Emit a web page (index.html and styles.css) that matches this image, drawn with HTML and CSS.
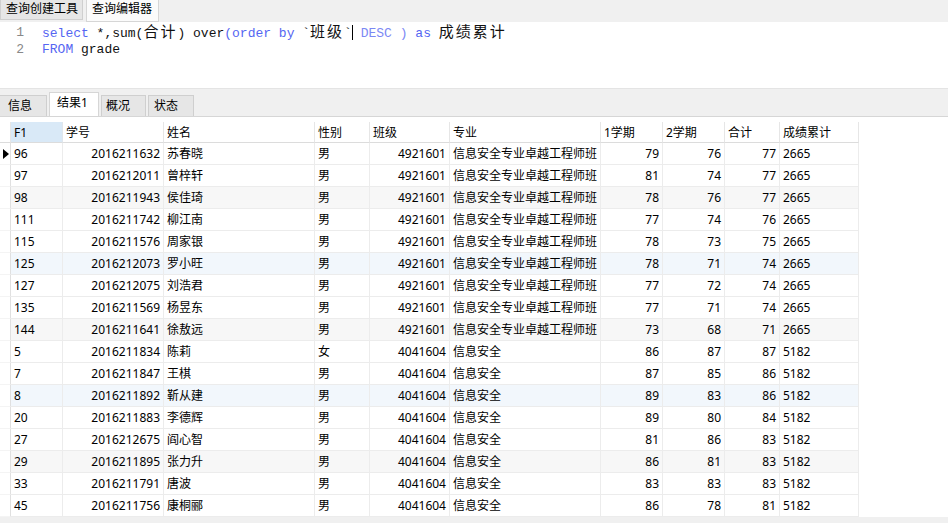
FILE: index.html
```html
<!DOCTYPE html>
<html lang="zh">
<head>
<meta charset="utf-8">
<title>查询编辑器</title>
<link rel="stylesheet" href="styles.css">
</head>
<body>
<div class="app">
  <div class="toptabs">
    <div class="ttab">查询创建工具</div>
    <div class="ttab active">查询编辑器</div>
  </div>
  <div class="editor">
    <div class="line"><span class="ln">1</span><span class="code"><span class="kw">select</span> *,sum(<span class="cjk">合计</span>) over<span class="kw">(order by</span> `<span class="cjk">班级</span>`<span class="caret"></span> <span class="kw2">DESC )</span> <span class="kw">as</span> <span class="cjk">成绩累计</span></span></div>
    <div class="line"><span class="ln">2</span><span class="code"><span class="kw">FROM</span> grade</span></div>
  </div>
  <div class="splitter"></div>
  <div class="restabs">
    <div class="rtab">信息</div>
    <div class="rtab active">结果1</div>
    <div class="rtab">概况</div>
    <div class="rtab">状态</div>
  </div>
  <div class="gridwrap">
    <div class="grid">
      <div class="hc ind"></div><div class="hc sel">F1</div><div class="hc">学号</div><div class="hc">姓名</div><div class="hc">性别</div><div class="hc">班级</div><div class="hc">专业</div><div class="hc">1学期</div><div class="hc">2学期</div><div class="hc">合计</div><div class="hc">成绩累计</div>

      <div class="c ind"><span class="tri"></span></div><div class="c">96</div><div class="c r">2016211632</div><div class="c">苏春晓</div><div class="c">男</div><div class="c r">4921601</div><div class="c">信息安全专业卓越工程师班</div><div class="c r">79</div><div class="c r">76</div><div class="c r">77</div><div class="c">2665</div>

      <div class="c ind"></div><div class="c">97</div><div class="c r">2016212011</div><div class="c">曾梓轩</div><div class="c">男</div><div class="c r">4921601</div><div class="c">信息安全专业卓越工程师班</div><div class="c r">81</div><div class="c r">74</div><div class="c r">77</div><div class="c">2665</div>

      <div class="c ind"></div><div class="c g">98</div><div class="c r g">2016211943</div><div class="c g">侯佳琦</div><div class="c g">男</div><div class="c r g">4921601</div><div class="c g">信息安全专业卓越工程师班</div><div class="c r g">78</div><div class="c r g">76</div><div class="c r g">77</div><div class="c g">2665</div>

      <div class="c ind"></div><div class="c">111</div><div class="c r">2016211742</div><div class="c">柳江南</div><div class="c">男</div><div class="c r">4921601</div><div class="c">信息安全专业卓越工程师班</div><div class="c r">77</div><div class="c r">74</div><div class="c r">76</div><div class="c">2665</div>

      <div class="c ind"></div><div class="c">115</div><div class="c r">2016211576</div><div class="c">周家银</div><div class="c">男</div><div class="c r">4921601</div><div class="c">信息安全专业卓越工程师班</div><div class="c r">78</div><div class="c r">73</div><div class="c r">75</div><div class="c">2665</div>

      <div class="c ind"></div><div class="c b">125</div><div class="c r b">2016212073</div><div class="c b">罗小旺</div><div class="c b">男</div><div class="c r b">4921601</div><div class="c b">信息安全专业卓越工程师班</div><div class="c r b">78</div><div class="c r b">71</div><div class="c r b">74</div><div class="c b">2665</div>

      <div class="c ind"></div><div class="c">127</div><div class="c r">2016212075</div><div class="c">刘浩君</div><div class="c">男</div><div class="c r">4921601</div><div class="c">信息安全专业卓越工程师班</div><div class="c r">77</div><div class="c r">72</div><div class="c r">74</div><div class="c">2665</div>

      <div class="c ind"></div><div class="c">135</div><div class="c r">2016211569</div><div class="c">杨昱东</div><div class="c">男</div><div class="c r">4921601</div><div class="c">信息安全专业卓越工程师班</div><div class="c r">77</div><div class="c r">71</div><div class="c r">74</div><div class="c">2665</div>

      <div class="c ind"></div><div class="c g">144</div><div class="c r g">2016211641</div><div class="c g">徐敖远</div><div class="c g">男</div><div class="c r g">4921601</div><div class="c g">信息安全专业卓越工程师班</div><div class="c r g">73</div><div class="c r g">68</div><div class="c r g">71</div><div class="c g">2665</div>

      <div class="c ind"></div><div class="c">5</div><div class="c r">2016211834</div><div class="c">陈莉</div><div class="c">女</div><div class="c r">4041604</div><div class="c">信息安全</div><div class="c r">86</div><div class="c r">87</div><div class="c r">87</div><div class="c">5182</div>

      <div class="c ind"></div><div class="c">7</div><div class="c r">2016211847</div><div class="c">王棋</div><div class="c">男</div><div class="c r">4041604</div><div class="c">信息安全</div><div class="c r">87</div><div class="c r">85</div><div class="c r">86</div><div class="c">5182</div>

      <div class="c ind"></div><div class="c b">8</div><div class="c r b">2016211892</div><div class="c b">靳从建</div><div class="c b">男</div><div class="c r b">4041604</div><div class="c b">信息安全</div><div class="c r b">89</div><div class="c r b">83</div><div class="c r b">86</div><div class="c b">5182</div>

      <div class="c ind"></div><div class="c">20</div><div class="c r">2016211883</div><div class="c">李德辉</div><div class="c">男</div><div class="c r">4041604</div><div class="c">信息安全</div><div class="c r">89</div><div class="c r">80</div><div class="c r">84</div><div class="c">5182</div>

      <div class="c ind"></div><div class="c">27</div><div class="c r">2016212675</div><div class="c">阎心智</div><div class="c">男</div><div class="c r">4041604</div><div class="c">信息安全</div><div class="c r">81</div><div class="c r">86</div><div class="c r">83</div><div class="c">5182</div>

      <div class="c ind"></div><div class="c g">29</div><div class="c r g">2016211895</div><div class="c g">张力升</div><div class="c g">男</div><div class="c r g">4041604</div><div class="c g">信息安全</div><div class="c r g">86</div><div class="c r g">81</div><div class="c r g">83</div><div class="c g">5182</div>

      <div class="c ind"></div><div class="c">33</div><div class="c r">2016211791</div><div class="c">唐波</div><div class="c">男</div><div class="c r">4041604</div><div class="c">信息安全</div><div class="c r">83</div><div class="c r">83</div><div class="c r">83</div><div class="c">5182</div>

      <div class="c ind"></div><div class="c">45</div><div class="c r">2016211756</div><div class="c">康桐郦</div><div class="c">男</div><div class="c r">4041604</div><div class="c">信息安全</div><div class="c r">86</div><div class="c r">78</div><div class="c r">81</div><div class="c">5182</div>
    </div>
  </div>
  <div class="hbar"></div>
</div>
</body>
</html>
```
FILE: styles.css
```css
* { box-sizing: border-box; }
html, body { margin: 0; padding: 0; }
body {
  width: 948px;
  height: 523px;
  overflow: hidden;
  background: #ffffff;
  font-family: "Noto Sans", "Noto Sans CJK SC", sans-serif;
  font-size: 12px;
  color: #000;
}
.app {
  display: flex;
  flex-direction: column;
  height: 523px;
}
.toptabs {
  height: 22px;
  background: #f0f0f0;
  display: flex;
  align-items: flex-start;
  gap: 3px;
  border-bottom: 1px solid #f0f0f0;
}
.ttab {
  height: 20px;
  line-height: 18px;
  padding: 0 4px 0 5px;
  background: #e6e6e6;
  border: 1px solid #cfcfcf;
  border-top: none;
  font-size: 12px;
}
.ttab.active {
  height: 22px;
  background: #fbfbfb;
  border-color: #d6d6d6;
  padding: 0 6px 0 5px;
}
.editor {
  height: 66px;
  background: #ffffff;
  padding-top: 3px;
}
.line {
  display: flex;
  height: 16px;
  line-height: 16px;
  font-family: "Liberation Mono", "Noto Sans CJK SC", monospace;
  font-size: 13px;
  white-space: pre;
}
.line + .line { margin-top: 1px; }
.ln {
  width: 24px;
  text-align: right;
  color: #888;
  flex: none;
}
.code {
  padding-left: 18px;
  color: #111;
}
.cjk {
  font-family: "Noto Sans CJK SC", sans-serif;
  font-size: 15px;
  line-height: 0;
  letter-spacing: 2px;
}
.kw { color: #5566f2; }
.kw2 { color: #7b88f4; }
.caret {
  display: inline-block;
  width: 1px;
  height: 15px;
  background: #000;
  vertical-align: -3px;
}
.splitter {
  height: 4px;
  background: #f0f0f0;
  border-top: 1px solid #e4e4e4;
}
.restabs {
  height: 25px;
  background: #f0f0f0;
  display: flex;
  align-items: flex-end;
  gap: 2px;
  border-bottom: 1px solid #d6d6d6;
}
.rtab {
  height: 21px;
  line-height: 20px;
  padding: 0 10px 0 8px;
  background: #e6e6e6;
  border: 1px solid #cfcfcf;
  border-bottom: none;
}
.rtab:first-child { border-left: none; width: 47px; }
.rtab.active {
  height: 24px;
  background: #ffffff;
  border-color: #d6d6d6;
  padding-left: 7px;
  width: 50px;
}
.rtab:nth-child(3) { width: 45px; padding-left: 4px; }
.rtab:nth-child(4) { width: 46px; padding-left: 5px; }
.gridwrap {
  background: #ffffff;
  padding-top: 5px;
}
.grid {
  display: grid;
  grid-template-columns: 11px 52px 101px 151px 55px 80px 151px 62px 62px 55px 79px;
  grid-auto-rows: 22px;
  grid-template-rows: 21px;
}
.hc {
  border-right: 1px solid #e6e6e6;
  border-bottom: 1px solid #dcdcdc;
  padding: 0 3px;
  line-height: 21px;
  background: #ffffff;
  white-space: nowrap;
  overflow: hidden;
}
.hc.ind { border-right: 1px solid #e6e6e6; padding: 0; }
.hc.sel { background: #d9e9f7; border-right-color: #e0e6ec; }
.c {
  border-right: 1px solid #ececec;
  border-bottom: 1px solid #ececec;
  padding: 0 3px;
  line-height: 22px;
  white-space: nowrap;
  overflow: hidden;
}
.c.r { text-align: right; }
.c.g { background: #f7f7f7; }
.c.b { background: #f2f7fc; }
.c.ind {
  padding: 0;
  border-right: 1px solid #e0e0e0;
  border-bottom: 1px solid #f4f4f4;
  display: flex;
  align-items: center;
  justify-content: center;
}
.tri {
  width: 0;
  height: 0;
  border-top: 5px solid transparent;
  border-bottom: 5px solid transparent;
  border-left: 6px solid #000;
  margin-left: 1px;
}
.hbar {
  flex: 1;
  background: #f0f0f0;
}
```
